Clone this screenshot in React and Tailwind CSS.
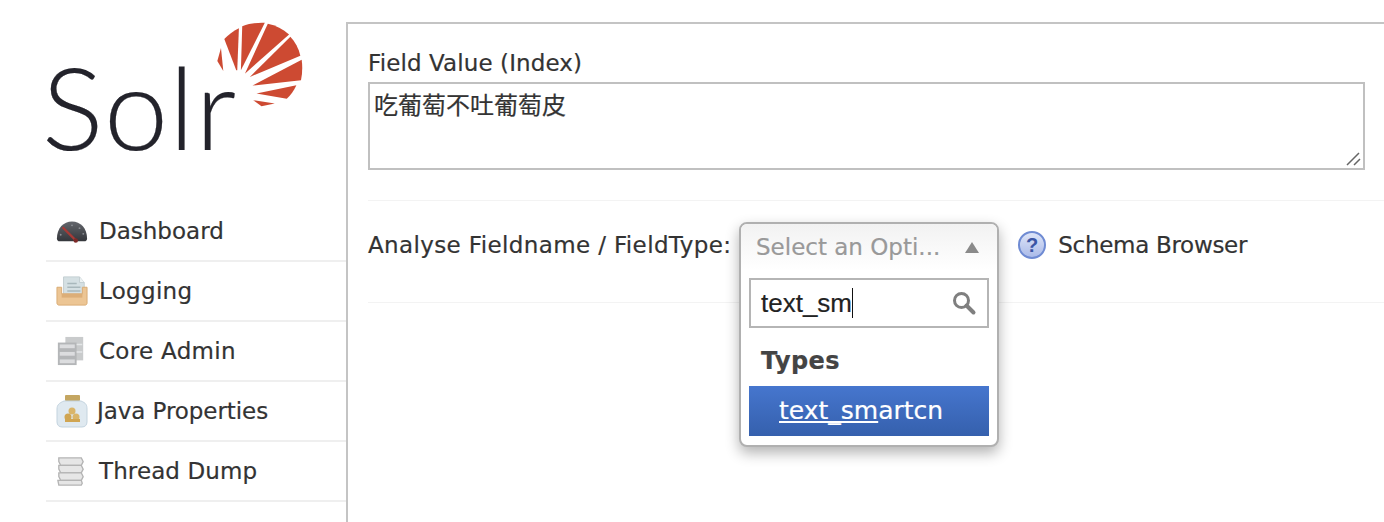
const font = { fontFamily: '"DejaVu Sans", sans-serif' };

const GaugeIcon = () => (
  <svg width="32" height="26" viewBox="0 0 34 26">
    <defs>
      <linearGradient id="gauge" x1="0" y1="0" x2="0" y2="1">
        <stop offset="0" stopColor="#63666c" />
        <stop offset="1" stopColor="#34363b" />
      </linearGradient>
    </defs>
    <path d="M1 21C1 10 8 3 17 3s16 7 16 18c0 2-1 3-3 3H4c-2 0-3-1-3-3z" fill="url(#gauge)" />
    <path d="M7 9l14 14" stroke="#a83a36" strokeWidth="2.4" />
    <circle cx="21" cy="23" r="2.4" fill="#7d2a28" />
    <circle cx="17" cy="7" r="1" fill="#8b8e94" />
    <circle cx="25" cy="10" r="1" fill="#8b8e94" />
    <circle cx="29" cy="16" r="1" fill="#8b8e94" />
    <circle cx="5" cy="17" r="1" fill="#8b8e94" />
  </svg>
);

const TrayIcon = () => (
  <svg width="32" height="32" viewBox="0 0 34 32">
    <path d="M8 1h17l5 6v14H8z" fill="#d5e0e3" stroke="#c2ced1" />
    <path d="M25 1v6h5" fill="#eef3f4" stroke="#c2ced1" />
    <path d="M12 8h10M12 12h14M12 16h14" stroke="#a9b8bc" strokeWidth="1.6" />
    <path d="M1 12h5v7h22v-7h5v17c0 1-1 2-2 2H3c-1 0-2-1-2-2z" fill="#ecc594" stroke="#d9aa72" />
    <path d="M6 19h22v4H6z" fill="#dcae78" />
  </svg>
);

const ServerIcon = () => (
  <svg width="30" height="32" viewBox="0 0 32 32">
    <rect x="10" y="1" width="19" height="25" fill="#c9cbcc" />
    <rect x="2" y="7" width="20" height="24" fill="#b4b6b8" />
    <path d="M22 9h6M22 17h6" stroke="#e4e6e7" strokeWidth="1.6" />
    <rect x="4" y="9" width="16" height="4" fill="#dcdddf" />
    <rect x="4" y="17" width="16" height="4" fill="#dcdddf" />
    <rect x="4" y="25" width="16" height="4" fill="#dcdddf" />
  </svg>
);

const JarIcon = () => (
  <svg width="32" height="34" viewBox="0 0 32 34">
    <rect x="9" y="1" width="15" height="6" rx="1" fill="#c4a661" />
    <path d="M8 7h17c5 2 6 4 6 8v13c0 3-2 5-5 5H6c-3 0-5-2-5-5V15c0-4 2-6 7-8z" fill="#dfe9f0" stroke="#c3d3de" />
    <circle cx="16" cy="17" r="3.5" fill="#d9b56a" />
    <circle cx="12" cy="23" r="3.5" fill="#d0a552" />
    <circle cx="20" cy="23" r="3.5" fill="#d9b56a" />
    <rect x="9" y="25" width="15" height="3" fill="#d0a552" />
  </svg>
);

const StackIcon = () => (
  <svg width="30" height="32" viewBox="0 0 32 32">
    <g fill="#e6e6e6" stroke="#b4b4b4" strokeWidth="1.4">
      <path d="M3 2h24l2 4-2 4H5L3 6z" />
      <path d="M3 10h24l2 4-2 4H5L3 14z" />
      <path d="M3 18h24l2 4-2 4H5L3 22z" />
      <path d="M2 26h25l1 3-1 2H3z" />
    </g>
  </svg>
);

const SunLogo = () => (
  <svg
    width="88"
    height="86"
    viewBox="555 32 265 258"
    className="absolute left-[169px] top-[-1px]"
  >
    <g fill="#cd4a32">
      <path d="M573 113l7 69-18-30z" />
      <path d="M583 86c12-13 26-24 44-33l-5 127h-3z" />
      <path d="M637 47c22-8 46-11 68-10l-72 143z" />
      <path d="M714 40c24 5 46 16 64 32L645 190z" />
      <path d="M782 79c14 15 25 35 30 57l-152 64z" />
      <path d="M816 148c3 21 2 42-2 62l-146 16z" />
      <path d="M800 225c-7 15-16 29-29 41l-91-16z" />
      <path d="M670 270l65 10-40 8z" />
    </g>
  </svg>
);

const MagnifierIcon = () => (
  <svg width="26" height="26" viewBox="0 0 26 26" fill="none" stroke="#7f7f7f">
    <circle cx="10.5" cy="10.5" r="7" strokeWidth="3" />
    <path d="M15.5 15.5l7 7" strokeWidth="4" strokeLinecap="round" />
  </svg>
);

const HelpIcon = () => (
  <svg width="30" height="30" viewBox="0 0 30 30">
    <defs>
      <linearGradient id="help" x1="0" y1="0" x2="0" y2="1">
        <stop offset="0" stopColor="#dfe6f8" />
        <stop offset="1" stopColor="#a9b9e8" />
      </linearGradient>
    </defs>
    <circle cx="15" cy="15" r="13" fill="url(#help)" stroke="#6f8bd3" strokeWidth="2" />
    <text x="15" y="22" textAnchor="middle" fontSize="20" fontWeight="700" fill="#3b55a5" fontFamily="Liberation Sans, sans-serif">
      ?
    </text>
  </svg>
);

const menu = [
  { name: "Dashboard", icon: <GaugeIcon />, text: "" },
  { name: "Logging", icon: <TrayIcon />, text: "tracking-[0.3px]" },
  { name: "Core Admin", icon: <ServerIcon />, text: "tracking-[0.3px]" },
  { name: "Java Properties", icon: <JarIcon />, text: "tracking-[-0.07px] ml-[-2px]" },
  { name: "Thread Dump", icon: <StackIcon />, text: "tracking-[0.1px]" },
];

const App = () => {
  return (
    <div
      className="flex h-[522px] w-[1384px] overflow-hidden bg-white text-[#333333] [-webkit-text-stroke:0.2px]"
      style={font}
    >
      <aside className="w-[346px] shrink-0 pl-[46px] pt-[22px]">
        <div className="relative h-[180px]">
          <SunLogo />
          <div
            className="absolute left-[-4px] top-[18px] text-[115px] font-light leading-[130px] tracking-[1px] text-[#23232b]"
            style={{ fontFamily: '"Lato", sans-serif' }}
          >
            Solr
          </div>
        </div>
        <nav>
          {menu.map((item) => (
            <div
              key={item.name}
              className="flex h-[60px] items-center border-b-2 border-[#efefef] pl-[10px] text-[23px]"
            >
              <span className="flex w-[43px] shrink-0 justify-start blur-[0.4px]">{item.icon}</span>
              <span className={item.text}>{item.name}</span>
            </div>
          ))}
        </nav>
      </aside>

      <main className="relative mt-[22px] flex-1 border-l-2 border-t-2 border-[#c4c4c4] pl-[20px]">
        <div className="pt-[24px] text-[23px] leading-[30px] tracking-[0.1px]">Field Value (Index)</div>
        <div className="relative mt-[4px] w-[997px]">
          <textarea
            defaultValue="吃葡萄不吐葡萄皮"
            className="block h-[88px] w-full resize-none border-2 border-[#c0c0c0] px-[4px] py-[7px] text-[24px] leading-[30px] outline-none"
            style={{ fontFamily: '"DejaVu Sans", "Noto Sans CJK SC", sans-serif' }}
          />
          <svg width="16" height="16" viewBox="0 0 16 16" className="absolute bottom-[4px] right-[4px]" stroke="#666666" strokeWidth="1.5">
            <path d="M2 15L14 3M9 15l6-6" />
          </svg>
        </div>
        <div className="mt-[30px] border-t border-[#f3f3f3]" />
        <div className="flex h-[102px] items-start border-b border-[#f3f3f3] pt-[28px]">
          <span className="text-[23px] leading-[32px] tracking-[0.37px]">Analyse Fieldname / FieldType:</span>
          <div className="ml-[286px] flex items-center">
            <HelpIcon />
            <span className="ml-[11px] text-[23px] leading-[32px] tracking-[-0.3px]">Schema Browser</span>
          </div>
        </div>

        <div className="absolute left-[391px] top-[198px] h-[225px] w-[260px] rounded-[8px] border-2 border-[#b0b0b0] bg-white px-[8px] shadow-[0_6px_14px_rgba(0,0,0,0.3)]">
          <div className="mx-[-8px] flex h-[46px] items-center rounded-t-[6px] bg-gradient-to-b from-[#f2f2f2] to-white pl-[15px] pr-[18px] text-[23px] text-[#999999]">
            <span className="flex-1">Select an Opti...</span>
            <span className="h-0 w-0 border-x-[7px] border-b-[11px] border-x-transparent border-b-[#8a8a8a]" />
          </div>
          <div className="mt-[8px] flex h-[50px] items-center border-2 border-[#b5b5b5] pl-[10px] pr-[10px]">
            <span className="text-[26px] leading-[30px] text-[#222222]" style={{ fontFamily: '"Liberation Sans", sans-serif' }}>
              text_sm
            </span>
            <span className="h-[30px] w-px bg-[#111111]" />
            <span className="ml-auto flex">
              <MagnifierIcon />
            </span>
          </div>
          <div className="mt-[17px] pl-[12px] text-[24px] font-bold leading-[32px] tracking-[0.4px] text-[#444444]">Types</div>
          <div className="mt-[9px] flex h-[50px] items-center bg-gradient-to-b from-[#4676ce] to-[#3560ad] pl-[30px] text-[25px] text-white">
            <span className="underline">text_sm</span>
            <span>artcn</span>
          </div>
        </div>
      </main>
    </div>
  );
};

export default App;
